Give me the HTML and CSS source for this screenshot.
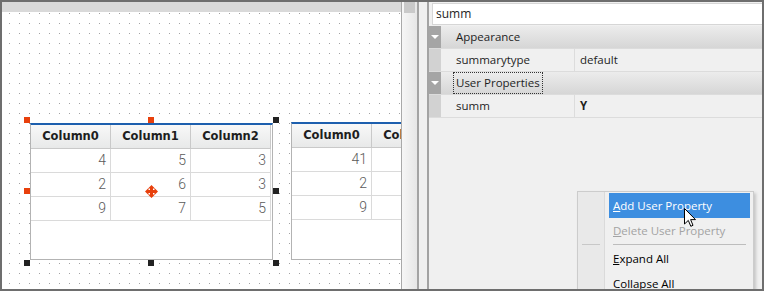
FILE: index.html
```html
<!DOCTYPE html>
<html lang="en">
<head>
    <meta charset="UTF-8">
    <title>Report Designer - User Properties</title>
    <link rel="stylesheet" href="styles.css">
</head>
<body>

    <div class="frame">
        <!-- Design surface -->
        <div class="canvas">
            <div class="canvas-bar"></div>
            <div class="canvas-grid"></div>

            <div class="dtable t1">
                <div class="dt-row dt-head">
                    <div class="dt-cell">Column0</div>
                    <div class="dt-cell">Column1</div>
                    <div class="dt-cell">Column2</div>
                </div>
                <div class="dt-row">
                    <div class="dt-cell">4</div>
                    <div class="dt-cell">5</div>
                    <div class="dt-cell">3</div>
                </div>
                <div class="dt-row">
                    <div class="dt-cell">2</div>
                    <div class="dt-cell">6</div>
                    <div class="dt-cell">3</div>
                </div>
                <div class="dt-row">
                    <div class="dt-cell">9</div>
                    <div class="dt-cell">7</div>
                    <div class="dt-cell">5</div>
                </div>
            </div>

            <!-- second table runs past the visible edge -->
            <div class="dtable t2">
                <div class="dt-row dt-head">
                    <div class="dt-cell">Column0</div>
                    <div class="dt-cell">Column1</div>
                    <div class="dt-cell"></div>
                </div>
                <div class="dt-row">
                    <div class="dt-cell">41</div>
                    <div class="dt-cell"></div>
                    <div class="dt-cell"></div>
                </div>
                <div class="dt-row">
                    <div class="dt-cell">2</div>
                    <div class="dt-cell"></div>
                    <div class="dt-cell"></div>
                </div>
                <div class="dt-row">
                    <div class="dt-cell">9</div>
                    <div class="dt-cell"></div>
                    <div class="dt-cell"></div>
                </div>
            </div>

            <!-- selection handles -->
            <span class="handle hot" style="left:22px; top:115px"></span>
            <span class="handle hot" style="left:146px; top:115px"></span>
            <span class="handle" style="left:271px; top:115px"></span>
            <span class="handle hot" style="left:22px; top:186px"></span>
            <span class="handle" style="left:271px; top:186px"></span>
            <span class="handle" style="left:22px; top:258px"></span>
            <span class="handle" style="left:146px; top:258px"></span>
            <span class="handle" style="left:271px; top:258px"></span>

            <svg class="move-icon" width="13" height="13" viewBox="0 0 13 13">
                <path d="M6.5 0 L10 3.5 H3 Z M6.5 13 L3 9.5 H10 Z M0 6.5 L3.5 3 V10 Z M13 6.5 L9.5 10 V3 Z" fill="#e8400c"/>
                <rect x="5" y="2" width="3" height="9" fill="#e8400c"/>
                <rect x="2" y="5" width="9" height="3" fill="#e8400c"/>
            </svg>
        </div>

        <div class="vscroll"><div class="thumb"></div></div>
        <div class="splitter"></div>

        <!-- Property grid -->
        <div class="props">
            <div class="search">summ</div>

            <div class="prop-row cat">
                <div class="gutter"><span class="arrow"></span></div>
                <div class="cat-label">Appearance</div>
            </div>
            <div class="prop-row">
                <div class="gutter"></div>
                <div class="name">summarytype</div>
                <div class="value">default</div>
            </div>
            <div class="prop-row cat">
                <div class="gutter"><span class="arrow"></span></div>
                <div class="cat-label"><span class="focus">User Properties</span></div>
            </div>
            <div class="prop-row">
                <div class="gutter"></div>
                <div class="name">summ</div>
                <div class="value strong">Y</div>
            </div>
        </div>

        <!-- Context menu -->
        <div class="menu">
            <div class="menu-item active"><u>A</u>dd User Property</div>
            <div class="menu-item disabled"><u>D</u>elete User Property</div>
            <div class="menu-sep"><span class="sep-short"></span><span class="sep-long"></span></div>
            <div class="menu-item"><u>E</u>xpand All</div>
            <div class="menu-item"><u>C</u>ollapse All</div>
        </div>

        <svg class="cursor" width="13" height="20" viewBox="0 0 13 20">
            <path d="M0.5 0.5 V16 L4.3 12.4 L6.8 18.3 L9 17.3 L6.6 11.6 H11.5 Z" fill="#fff" stroke="#000" stroke-width="1" stroke-linejoin="round"/>
        </svg>
    </div>

</body>
</html>
```

FILE: styles.css
```css
/* General */
body {
    margin: 0;
    background: #ffffff;
    font-family: "Open Sans", "Noto Sans", sans-serif;
}

.frame {
    width: 764px;
    height: 291px;
    box-sizing: border-box;
    border: 2px solid #6e6e6e;
    display: flex;
    position: relative;
    overflow: hidden;
}

/* Design surface */
.canvas {
    width: 399px;
    border-right: 1px solid #a9a9a9;
    display: flex;
    flex-direction: column;
    position: relative;
    overflow: hidden;
    background: #ffffff;
}

.canvas-bar {
    height: 10px;
    background: #d9d9d9;
}

.canvas-grid {
    flex: 1;
    background-color: #ffffff;
    background-image:
        linear-gradient(to right, transparent 1px, #ffffff 1px),
        linear-gradient(to bottom, #a3a3a3 1px, #ffffff 1px);
    background-size: 10px 10px;
    background-position: 7px 1px;
}

/* Tables on the surface */
.dtable {
    position: absolute;
    width: 241px;
    height: 134px;
    border: 1px solid #b3b3b3;
    border-top: 2px solid #1d5fae;
    background: #ffffff;
}

.t1 {
    left: 28px;
    top: 121px;
}

.t2 {
    left: 289px;
    top: 120px;
    height: 135px;
}

.dt-row {
    display: flex;
    height: 24px;
}

.dt-cell {
    width: 80px;
    box-sizing: border-box;
    border-right: 1px solid #dadada;
    border-bottom: 1px solid #dadada;
    padding-right: 4px;
    text-align: right;
    font-family: Roboto, sans-serif;
    font-weight: 300;
    font-size: 14px;
    line-height: 23px;
    color: #5a5a5a;
}

.dt-head .dt-cell {
    padding-right: 0;
    text-align: center;
    background: linear-gradient(#f8f8f8, #e8e9e9);
    border-color: #c9c9c9;
    font-family: "DejaVu Sans", sans-serif;
    font-weight: bold;
    font-size: 11.5px;
    color: #1e1e1e;
}

/* Selection handles */
.handle {
    position: absolute;
    width: 6px;
    height: 6px;
    background: #222222;
}

.handle.hot {
    background: #e8400c;
}

.move-icon {
    position: absolute;
    left: 143px;
    top: 183px;
}

/* Scrollbar and splitter */
.vscroll {
    width: 15px;
    background: linear-gradient(to right, #f6f6f6, #e6e6e6);
    border-right: 2px solid #a3a3a3;
}

.vscroll .thumb {
    margin-left: 2px;
    width: 11px;
    height: 11px;
    background: #c9c9c9;
}

.splitter {
    width: 8px;
    background: #f0f0f0;
    border-right: 2px solid #a3a3a3;
}

/* Property grid */
.props {
    width: 333px;
    background: #f0f0f0;
    display: flex;
    flex-direction: column;
    font-size: 11.5px;
    color: #1e1e1e;
}

.search {
    margin: 1px 0 1px 3px;
    height: 22px;
    box-sizing: border-box;
    background: #ffffff;
    border: 1px solid #d6d6d6;
    border-right: none;
    padding-left: 3px;
    line-height: 19px;
    font-size: 12px;
}

.prop-row {
    display: flex;
    height: 22px;
    border-bottom: 1px solid #dcdcdc;
    line-height: 22px;
}

.gutter {
    width: 12px;
    background: #d2d2d2;
    display: flex;
    justify-content: center;
    align-items: center;
}

.cat .gutter {
    background: #a5a5a5;
}

.arrow {
    width: 0;
    height: 0;
    border-left: 4px solid transparent;
    border-right: 4px solid transparent;
    border-top: 4px solid #ffffff;
}

.cat-label {
    flex: 1;
    padding-left: 12px;
    background: linear-gradient(#ececec, #d6d6d6);
}

.focus {
    display: inline-block;
    padding: 0 2px;
    height: 20px;
    line-height: 19px;
    border: 1px dotted #333333;
}

.cat-label:not(:has(.focus)) {
    padding-left: 15px;
}

.name {
    width: 134px;
    box-sizing: border-box;
    padding-left: 15px;
    border-right: 1px solid #dcdcdc;
}

.value {
    padding-left: 5px;
}

.value.strong {
    font-weight: bold;
}

/* Context menu */
.menu {
    position: absolute;
    left: 575px;
    top: 189px;
    width: 141px;
    padding: 1px 3px 2px 31px;
    border: 1px solid #cccccc;
    background: linear-gradient(to right, #e9e9e9 26px, #dadada 26px 27px, #f0f0f0 27px);
    box-shadow: 2px 2px 3px rgba(0, 0, 0, 0.18);
    font-size: 11.5px;
}

.menu-item {
    height: 25px;
    line-height: 25px;
    padding-left: 4px;
    color: #000000;
    white-space: nowrap;
}

.menu-item.active {
    background: #3d8ee0;
    color: #ffffff;
}

.menu-item.disabled {
    color: #a3a3a3;
}

.menu-sep {
    display: flex;
    align-items: center;
    height: 3px;
    margin-left: -31px;
}

.sep-short {
    width: 18px;
    height: 1px;
    margin-left: 4px;
    background: #c8c8c8;
}

.sep-long {
    flex: 1;
    height: 1px;
    margin: 0 4px 0 13px;
    background: #bdbdbd;
}

.cursor {
    position: absolute;
    left: 682px;
    top: 206px;
}
```
